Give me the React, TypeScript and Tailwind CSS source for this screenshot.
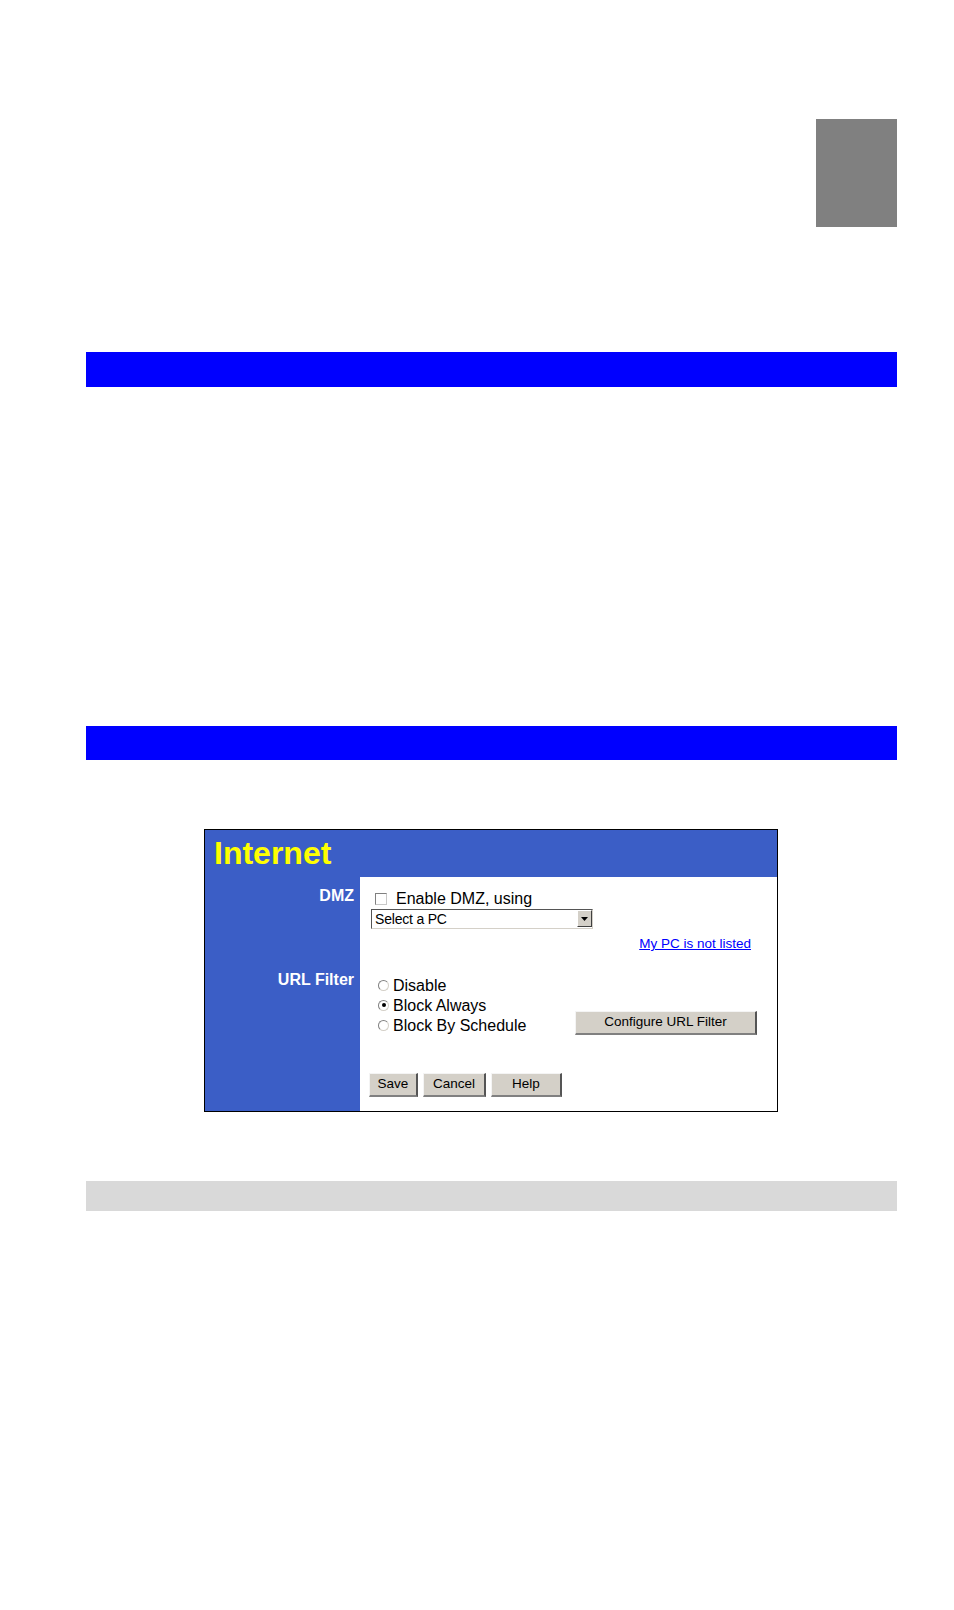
import React from 'react';

const font = { fontFamily: '"Liberation Sans", Arial, sans-serif' };

const Btn: React.FC<{ label: string; w: string }> = ({ label, w }) => (
  <div
    className={`${w} h-[24px] flex items-center justify-center bg-[#d4d0c8] text-[13.5px] text-black border-t border-l border-t-[#f4f4f4] border-l-[#f4f4f4] border-r-2 border-b-2 border-r-[#555] border-b-[#808080]`}
  >
    {label}
  </div>
);

const Radio: React.FC<{ checked?: boolean; label: string }> = ({ checked, label }) => (
  <div className="flex items-center h-[20px] leading-[20px] text-[16px] text-black">
    <span className="w-[11px] h-[11px] -mt-[2px] rounded-full border border-t-[#808080] border-l-[#808080] border-r-[#d4d0c8] border-b-[#d4d0c8] bg-white flex items-center justify-center mr-[4px]">
      {checked && <span className="w-[4px] h-[4px] rounded-full bg-black" />}
    </span>
    {label}
  </div>
);

export default function App() {
  return (
    <div className="w-[954px] h-[1610px] bg-white overflow-hidden" style={font}>
      <div className="pt-[119px]">
        <div className="ml-[816px] w-[81px] h-[108px] bg-[#808080]" />
      </div>

      <div className="mt-[125px] ml-[86px] w-[811px] h-[35px] bg-[#0000ff]" />
      <div className="mt-[339px] ml-[86px] w-[811px] h-[34px] bg-[#0000ff]" />

      <div className="mt-[69px] ml-[204px] w-[574px] h-[283px] border border-black bg-[#3b5ec6] flex flex-col">
        <div className="h-[47px] pt-[5px] pl-[9px]">
          <span className="text-[32px] leading-[36px] font-bold text-[#ffff00]">Internet</span>
        </div>
        <div className="flex flex-1">
          <div className="w-[155px] flex flex-col items-end pr-[6px] pt-[9px] text-white font-bold text-[16px] leading-[20px]">
            <div>DMZ</div>
            <div className="mt-[64px]">URL Filter</div>
          </div>
          <div className="flex-1 bg-white flex flex-col pt-[12px]">
            <div className="flex items-center h-[20px] pl-[15px] text-[16px] leading-[20px] text-black">
              <span className="w-[12px] h-[12px] border border-t-[#808080] border-l-[#808080] border-r-[#c8c8c8] border-b-[#c8c8c8] bg-white mr-[9px]" />
              Enable DMZ, using
            </div>
            <div className="ml-[11px] w-[222px] h-[20px] flex border border-t-[#555] border-l-[#555] border-r-[#d4d0c8] border-b-[#d4d0c8] bg-white">
              <div className="flex-1 pl-[3px] text-[14px] leading-[18px] tracking-[-0.2px] text-black">Select a PC</div>
              <div className="w-[15px] h-[17px] bg-[#d4d0c8] border-r border-b border-r-[#404040] border-b-[#404040] border-t border-l border-t-white border-l-white flex items-center justify-center">
                <svg width="7" height="4" viewBox="0 0 7 4">
                  <polygon points="0,0 7,0 3.5,4" fill="#000" />
                </svg>
              </div>
            </div>
            <div className="mt-[7px] flex justify-end pr-[26px]">
              <a className="text-[13.5px] leading-[16px] text-[#0000ff] underline">My PC is not listed</a>
            </div>
            <div className="mt-[24px] flex items-end justify-between pl-[18px] pr-[20px]">
              <div className="flex flex-col">
                <Radio label="Disable" />
                <Radio label="Block Always" checked />
                <Radio label="Block By Schedule" />
              </div>
              <div className="mb-[1px]">
                <Btn label="Configure URL Filter" w="w-[182px]" />
              </div>
            </div>
            <div className="mt-[37px] pl-[9px] flex gap-[5px]">
              <Btn label="Save" w="w-[49px]" />
              <Btn label="Cancel" w="w-[63px]" />
              <Btn label="Help" w="w-[71px]" />
            </div>
          </div>
        </div>
      </div>

      <div className="mt-[69px] ml-[86px] w-[811px] h-[30px] bg-[#d9d9d9]" />
    </div>
  );
}
